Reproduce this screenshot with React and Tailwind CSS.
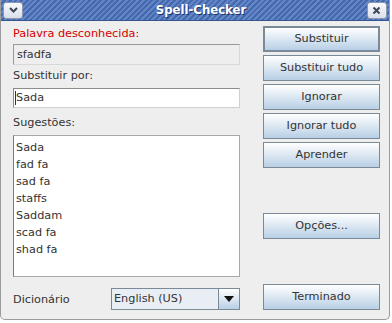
import React from 'react';

const suggestions = ['Sada', 'fad fa', 'sad fa', 'staffs', 'Saddam', 'scad fa', 'shad fa'];

const TitleButton = ({ children }) => (
  <div className="w-[20px] h-[17px] rounded-[3px] border border-[#8a97ae] bg-[linear-gradient(#f8f9fb,#d9dfea)] flex items-center justify-center">
    {children}
  </div>
);

const Btn = ({ label, focused }) => (
  <button
    className={
      focused
        ? 'h-[26px] w-[117px] border-2 border-[#7a8a99] bg-[linear-gradient(#ffffff,#b8cfe5)] text-[#333333] text-[11.25px] leading-none'
        : 'h-[26px] w-[117px] border border-[#7a8a99] bg-[linear-gradient(#ffffff,#b8cfe5)] text-[#333333] text-[11.25px] leading-none'
    }
  >
    {label}
  </button>
);

const App = () => {
  return (
    <div className="w-[392px] h-[323px] bg-white font-['DejaVu_Sans',sans-serif]">
      <div className="w-[390px] h-[320px] flex flex-col bg-[#eeeeee] border-l border-r border-b border-[#9a9a9a] rounded-b-[5px] overflow-hidden">
        {/* Title bar */}
        <div className="h-[21px] shrink-0 flex items-center justify-between px-[2px] border-b border-[#34558f] bg-[repeating-linear-gradient(135deg,#6286c8_0px,#6286c8_2px,#4669ae_2px,#4669ae_4px)]">
          <TitleButton>
            <svg width="11" height="8" viewBox="0 0 11 8">
              <path d="M2 2 L5.5 5.5 L9 2" fill="none" stroke="#3d4658" strokeWidth="2" />
            </svg>
          </TitleButton>
          <div className="text-white font-bold text-[13px] font-['DejaVu_Sans_Condensed','DejaVu_Sans',sans-serif] [text-shadow:1px_1px_0_#1e3766] ml-[12px]">
            Spell-Checker
          </div>
          <TitleButton>
            <svg width="9" height="9" viewBox="0 0 9 9">
              <path d="M1.5 1.5 L7.5 7.5 M7.5 1.5 L1.5 7.5" fill="none" stroke="#3d4658" strokeWidth="2" />
            </svg>
          </TitleButton>
        </div>

        {/* Body */}
        <div className="flex flex-1 pl-[12px] text-[11.25px] text-[#333333]">
          {/* Left column */}
          <div className="w-[227px] flex flex-col">
            <div className="mt-[4px] h-[17px] leading-[17px] text-[#d40000]">Palavra desconhecida:</div>
            <div className="mt-[2px] h-[21px] leading-[19px] pl-[3px] bg-[#eeeeee] border border-t-[#999999] border-l-[#999999] border-r-[#d8d8d8] border-b-[#d8d8d8]">
              sfadfa
            </div>
            <div className="mt-[2px] h-[17px] leading-[17px]">Substituir por:</div>
            <div className="mt-[4px] h-[20px] leading-[18px] pl-[2px] bg-white border border-t-[#8c8c8c] border-l-[#8c8c8c] border-r-[#d0d0d0] border-b-[#d0d0d0] relative">
              <span className="absolute left-[1px] top-[2px] w-px h-[14px] bg-[#333333]" />
              Sada
            </div>
            <div className="mt-[6px] h-[17px] leading-[17px]">Sugestões:</div>
            <div className="mt-[4px] h-[142px] bg-white border border-[#a8a8a8] border-l-[#7c7c7c] pt-[3px] pl-[2px]">
              {suggestions.map((s) => (
                <div key={s} className="h-[17px] leading-[17px]">{s}</div>
              ))}
            </div>
            <div className="mt-[11px] h-[22px] flex items-center">
              <span className="w-[98px] pt-[3px]">Dicionário</span>
              <div className="flex h-[22px] w-[129px] border border-[#7a8a99] bg-[#e9eef5]">
                <div className="flex-1 pl-[2px] leading-[20px] border-r border-[#7a8a99]">English (US)</div>
                <div className="w-[20px] flex items-center justify-center bg-[linear-gradient(#ffffff,#b8cfe5)]">
                  <svg width="10" height="6" viewBox="0 0 10 6">
                    <path d="M0 0 H10 L5 6 Z" fill="#111111" />
                  </svg>
                </div>
              </div>
            </div>
          </div>

          {/* Right column */}
          <div className="ml-[23px] w-[117px] flex flex-col pt-[5px] gap-[3px]">
            <Btn label="Substituir" focused />
            <Btn label="Substituir tudo" />
            <Btn label="Ignorar" />
            <Btn label="Ignorar tudo" />
            <Btn label="Aprender" />
            <div className="mt-[42px]">
              <Btn label="Opções..." />
            </div>
            <div className="mt-[42px]">
              <Btn label="Terminado" />
            </div>
          </div>
        </div>
      </div>
    </div>
  );
};

export default App;
